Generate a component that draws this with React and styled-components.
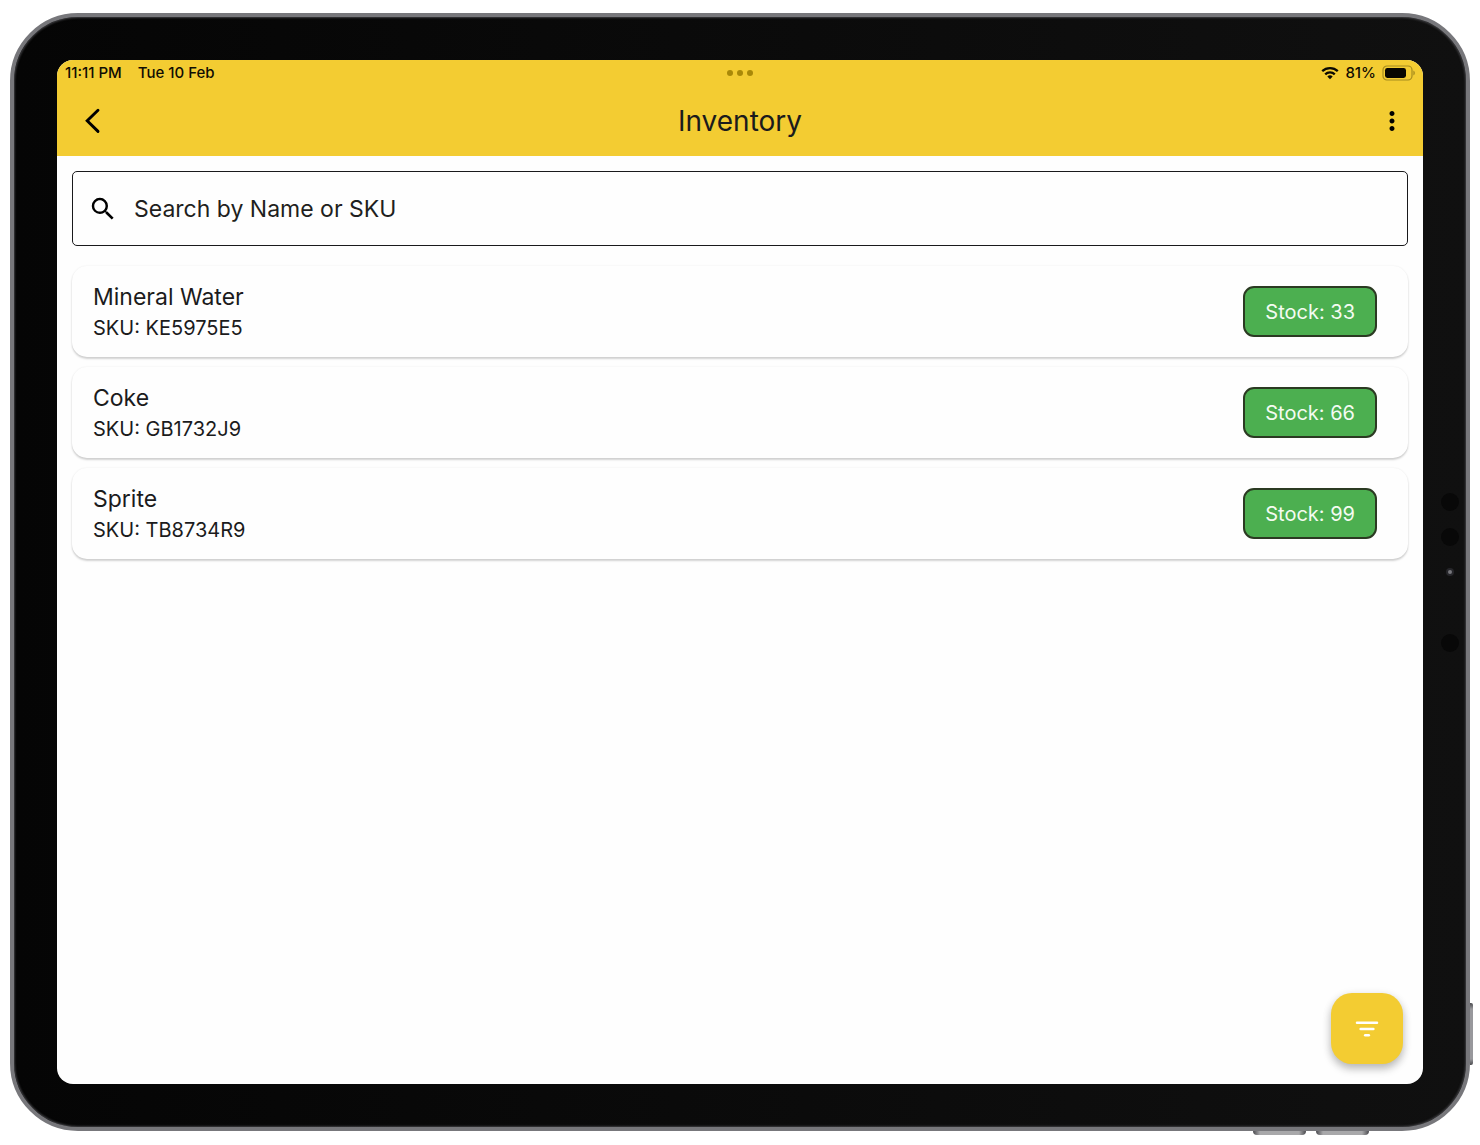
import React from "react";
import styled, { createGlobalStyle } from "styled-components";
import { MdMoreVert, MdSearch } from "react-icons/md";

const products = [
  { name: "Mineral Water", sku: "KE5975E5", stock: 33 },
  { name: "Coke", sku: "GB1732J9", stock: 66 },
  { name: "Sprite", sku: "TB8734R9", stock: 99 },
];

const WifiIcon = () => (
  <svg width="18" height="14" viewBox="0 0 18 14" aria-hidden="true">
    <g fill="none" stroke="#0b0a02" strokeWidth="2.3">
      <path d="M1.2 5.2 A11.2 11.2 0 0 1 16.8 5.2" />
      <path d="M4.2 8.3 A6.9 6.9 0 0 1 13.8 8.3" />
    </g>
    <path d="M6.3 10.6 A3.9 3.9 0 0 1 11.7 10.6 L9 13.3 Z" fill="#0b0a02" />
  </svg>
);

const BatteryIcon = () => (
  <svg width="33" height="16" viewBox="0 0 33 16" aria-hidden="true">
    <rect
      x="1"
      y="1"
      width="29"
      height="14"
      rx="4"
      fill="none"
      stroke="#a58b1e"
      strokeWidth="1.2"
    />
    <rect x="3" y="3" width="21" height="10" rx="2.4" fill="#080700" />
    <path d="M31.4 5.6 Q32.9 6.4 32.9 8 Q32.9 9.6 31.4 10.4 Z" fill="#a58b1e" />
  </svg>
);

const BackIcon = () => (
  <svg width="30" height="30" viewBox="0 0 30 30" aria-hidden="true">
    <path
      d="M21 4.2 L10.2 14.8 L21 25.4"
      fill="none"
      stroke="#000"
      strokeWidth="2.9"
      strokeLinecap="round"
      strokeLinejoin="miter"
    />
  </svg>
);

const FilterIcon = () => (
  <svg width="30" height="30" viewBox="0 0 30 30" aria-hidden="true">
    <g stroke="#fff" strokeWidth="2.5" strokeLinecap="round">
      <path d="M5 8.8 H25" />
      <path d="M8.6 15 H21.4" />
      <path d="M13.2 21.2 H16.8" />
    </g>
  </svg>
);

const Sensors = () => (
  <svg width="20" height="164" viewBox="0 0 20 164" aria-hidden="true">
    <circle cx="10" cy="12" r="9" fill="#080808" />
    <circle cx="10" cy="47" r="9" fill="#080808" />
    <circle cx="10" cy="82" r="4" fill="#26262a" />
    <circle cx="10" cy="82" r="2" fill="#77777c" />
    <circle cx="10" cy="153" r="9" fill="#080808" />
  </svg>
);

const App = () => {
  return (
    <Stage>
      <GlobalStyle />
      <Device>
        <SideKey />
        <BottomKeys>
          <BottomKey />
          <BottomKey />
        </BottomKeys>
        <Screen>
          <Header>
            <StatusBar>
              <StatusGroup>
                <span>11:11 PM</span>
                <span>Tue 10 Feb</span>
              </StatusGroup>
              <Multitask>
                <i />
                <i />
                <i />
              </Multitask>
              <StatusGroup $end>
                <WifiIcon />
                <span>81%</span>
                <BatteryIcon />
              </StatusGroup>
            </StatusBar>
            <AppBar>
              <IconButton type="button" aria-label="Back">
                <BackIcon />
              </IconButton>
              <Title>Inventory</Title>
              <IconButton type="button" aria-label="More options" $end>
                <MdMoreVert size={30} />
              </IconButton>
            </AppBar>
          </Header>
          <Content>
            <SearchBox>
              <MdSearch size={30} />
              <input
                type="search"
                aria-label="Search by Name or SKU"
                placeholder="Search by Name or SKU"
              />
            </SearchBox>
            <ProductList>
              {products.map(({ name, sku, stock }) => (
                <ProductCard key={sku}>
                  <div>
                    <ProductName>{name}</ProductName>
                    <ProductSku>SKU: {sku}</ProductSku>
                  </div>
                  <StockBadge>Stock: {stock}</StockBadge>
                </ProductCard>
              ))}
            </ProductList>
          </Content>
          <FilterButton type="button" aria-label="Filter">
            <FilterIcon />
          </FilterButton>
        </Screen>
        <SensorStrip>
          <Sensors />
        </SensorStrip>
      </Device>
    </Stage>
  );
};

const GlobalStyle = createGlobalStyle`
  * {
    box-sizing: border-box;
  }
  body {
    margin: 0;
    background: #fff;
    color: #1b1b1c;
    font-family: Inter, "Liberation Sans", sans-serif;
  }
  button,
  input {
    font: inherit;
    color: inherit;
  }
`;

const Stage = styled.div`
  display: flex;
  min-height: 100vh;
  padding: 13px 10px 14px;
`;

const Device = styled.div`
  position: relative;
  display: flex;
  flex: 1;
  min-width: 0;
  padding: 43px 0 43px 43px;
  border: 4px solid #77777b;
  border-radius: 68px;
  background: linear-gradient(90deg, #050505, #101010);
  box-shadow: inset 0 0 2px 1px #3c3c3f;
`;

const SideKey = styled.span`
  position: absolute;
  right: -7px;
  bottom: 62px;
  width: 3px;
  height: 62px;
  border-radius: 0 2px 2px 0;
  background: linear-gradient(#4a4a4e, #98989c 6px, #98989c 56px, #4a4a4e);
`;

const BottomKeys = styled.div`
  position: absolute;
  right: 97px;
  bottom: -8px;
  display: flex;
  gap: 10px;
`;

const BottomKey = styled.span`
  width: 53px;
  height: 4px;
  border-radius: 0 0 4px 4px;
  background: linear-gradient(90deg, #4a4a4e, #a8a8aa 7px, #a8a8aa 46px, #4a4a4e);
`;

const SensorStrip = styled.div`
  display: flex;
  flex: none;
  align-items: center;
  justify-content: center;
  width: 43px;
  padding-left: 10px;
`;

const Screen = styled.main`
  position: relative;
  display: flex;
  flex: 1;
  flex-direction: column;
  min-width: 0;
  border-radius: 16px;
  background: #fefefe;
  overflow: hidden;
`;

const Header = styled.header`
  background: #f3cc32;
`;

const StatusBar = styled.div`
  display: grid;
  grid-template-columns: 1fr auto 1fr;
  align-items: center;
  height: 25px;
  padding: 0 8px;
  color: #0f0d03;
  font-size: 15px;
  font-weight: 500;
  line-height: 20px;
`;

const StatusGroup = styled.div`
  display: flex;
  align-items: center;
  justify-content: ${({ $end }) => ($end ? "flex-end" : "flex-start")};
  gap: ${({ $end }) => ($end ? "6px" : "16px")};
  white-space: nowrap;
`;

const Multitask = styled.div`
  display: flex;
  gap: 4px;
  i {
    width: 6px;
    height: 6px;
    border-radius: 50%;
    background: #a98908;
  }
`;

const AppBar = styled.div`
  display: grid;
  grid-template-columns: 1fr auto 1fr;
  align-items: center;
  height: 71px;
  padding: 0 12px;
`;

const IconButton = styled.button`
  display: flex;
  justify-self: ${({ $end }) => ($end ? "end" : "start")};
  padding: ${({ $end }) => ($end ? "4px" : "4px 8px")};
  border: 0;
  background: none;
  color: #000;
  cursor: pointer;
`;

const Title = styled.h1`
  margin: 0;
  font-size: 28px;
  font-weight: 400;
  line-height: 36px;
`;

const Content = styled.div`
  display: flex;
  flex-direction: column;
  gap: 20px;
  padding: 15px;
`;

const SearchBox = styled.label`
  display: flex;
  align-items: center;
  gap: 16px;
  height: 75px;
  padding: 0 15px;
  border: 1px solid #1a1a1c;
  border-radius: 5px;
  color: #000;

  input {
    flex: 1;
    min-width: 0;
    padding: 0;
    border: 0;
    outline: 0;
    background: none;
    font-size: 23px;
    line-height: 32px;
  }
  input::placeholder {
    color: #1f1f20;
    opacity: 1;
  }
`;

const ProductList = styled.ul`
  display: flex;
  flex-direction: column;
  gap: 10px;
  margin: 0;
  padding: 0;
  list-style: none;
`;

const ProductCard = styled.li`
  display: flex;
  align-items: center;
  justify-content: space-between;
  min-height: 91px;
  padding: 0 31px 0 21px;
  border-radius: 15px;
  background: #fefefe;
  box-shadow: 0 2px 2px rgba(0, 0, 0, 0.17), 0 0 2px rgba(0, 0, 0, 0.08);
`;

const ProductName = styled.div`
  font-size: 23px;
  line-height: 32px;
`;

const ProductSku = styled.div`
  font-size: 20px;
  line-height: 30px;
`;

const StockBadge = styled.span`
  padding: 9px 20px 8px;
  border: 2px solid #2b3a22;
  border-radius: 11px;
  background: #4caf50;
  color: #f4fbf2;
  font-size: 20px;
  line-height: 30px;
  white-space: nowrap;
`;

const FilterButton = styled.button`
  position: absolute;
  right: 20px;
  bottom: 20px;
  display: flex;
  align-items: center;
  justify-content: center;
  width: 72px;
  height: 71px;
  padding: 0;
  border: 0;
  border-radius: 21px;
  background: #f3cc32;
  box-shadow: 0 5px 8px rgba(0, 0, 0, 0.22), 0 2px 10px rgba(0, 0, 0, 0.1);
  cursor: pointer;
`;

export default App;
